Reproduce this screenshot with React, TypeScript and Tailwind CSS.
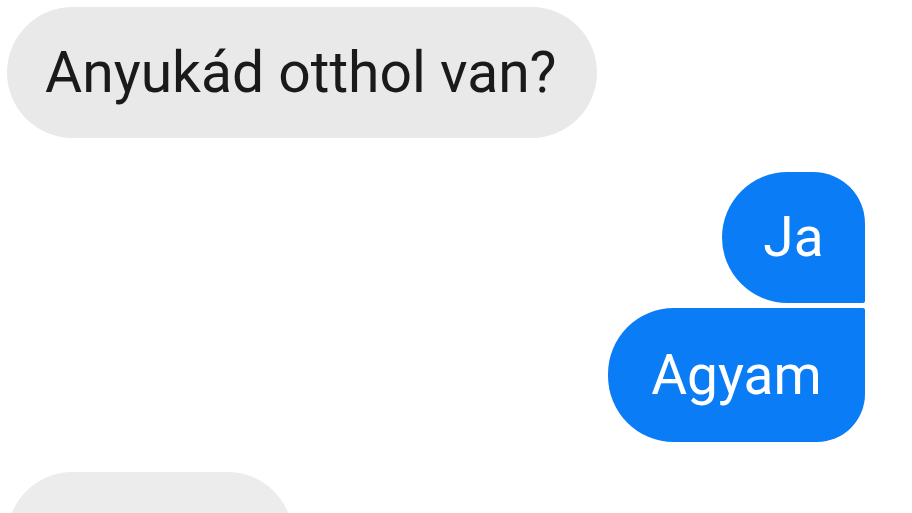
export default function App() {
  return (
    <div className="flex h-[513px] w-[912px] flex-col overflow-hidden bg-white font-['Roboto',sans-serif]">
      <div className="ml-[7px] mt-[7px] flex h-[131px] w-[590px] shrink-0 items-center rounded-[66px] bg-[#e9e9e9] pl-[38px] text-[57px] leading-none text-[#1a1a1a]">
        Anyukád otthol van?
      </div>
      <div className="mr-[47px] mt-[34px] flex h-[131px] w-[143px] shrink-0 items-center justify-center self-end rounded-l-[66px] rounded-tr-[52px] rounded-br-[2px] bg-[#0a7cf5] text-[55px] leading-none text-white">
        Ja
      </div>
      <div className="mr-[47px] mt-[5px] flex h-[134px] w-[257px] shrink-0 items-center justify-center self-end rounded-l-[66px] rounded-tr-[2px] rounded-br-[48px] bg-[#0a7cf5] text-[55px] leading-none text-white">
        Agyam
      </div>
      <div className="ml-[7px] mt-[30px] h-[131px] w-[286px] shrink-0 rounded-[66px] bg-[#ececec]" />
    </div>
  );
}
